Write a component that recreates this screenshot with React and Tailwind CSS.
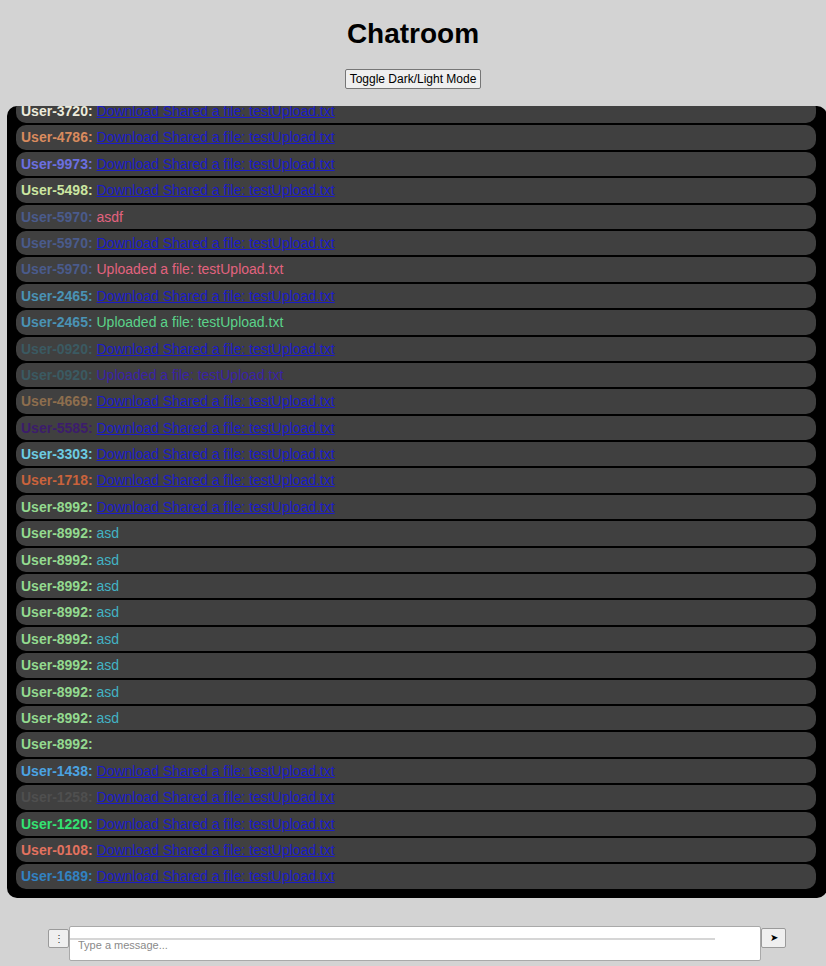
import { useEffect, useRef } from "react";

const LINK = "Download Shared a file: testUpload.txt";

const MESSAGES = [
  { u: "User-3720", c: "#ecebdc", link: true },
  { u: "User-4786", c: "#d98b5e", link: true },
  { u: "User-9973", c: "#6b6fe0", link: true },
  { u: "User-5498", c: "#cbe6a0", link: true },
  { u: "User-5970", c: "#4a5b8c", t: "asdf", tc: "#e2637f" },
  { u: "User-5970", c: "#4a5b8c", link: true },
  { u: "User-5970", c: "#4a5b8c", t: "Uploaded a file: testUpload.txt", tc: "#e2637f" },
  { u: "User-2465", c: "#4a92b4", link: true },
  { u: "User-2465", c: "#4a92b4", t: "Uploaded a file: testUpload.txt", tc: "#5bd38a" },
  { u: "User-0920", c: "#3b5a62", link: true },
  { u: "User-0920", c: "#3b5a62", t: "Uploaded a file: testUpload.txt", tc: "#3a22a6" },
  { u: "User-4669", c: "#8d6e4e", link: true },
  { u: "User-5585", c: "#3c1c6c", link: true },
  { u: "User-3303", c: "#6ccbe2", link: true },
  { u: "User-1718", c: "#c9633c", link: true },
  { u: "User-8992", c: "#93da8f", link: true },
  ...Array.from({ length: 8 }, () => ({ u: "User-8992", c: "#93da8f", t: "asd", tc: "#43b3c4" })),
  { u: "User-8992", c: "#93da8f", t: "", tc: "#43b3c4" },
  { u: "User-1438", c: "#4ba3e2", link: true },
  { u: "User-1258", c: "#4f4f4f", link: true },
  { u: "User-1220", c: "#33e272", link: true },
  { u: "User-0108", c: "#e2725f", link: true },
  { u: "User-1689", c: "#3282c2", link: true },
];

export default function App() {
  const boxRef = useRef(null);

  useEffect(() => {
    // keep the chat scrolled to the newest message
    if (boxRef.current) boxRef.current.scrollTop = boxRef.current.scrollHeight;
  }, []);

  return (
    <div className="min-h-screen w-full overflow-hidden bg-[#d3d3d3] font-['Liberation_Sans',Arial,sans-serif]">
      <h1 className="pt-[19px] text-center text-[28px] font-bold leading-[30px] text-black">Chatroom</h1>
      <div className="mt-[20px] flex justify-center">
        <button className="h-[20px] rounded-[2px] border border-[#767676] bg-[#efefef] px-[4px] text-[12px] leading-[18px] text-black">
          Toggle Dark/Light Mode
        </button>
      </div>

      <div
        ref={boxRef}
        className="mt-[17px] ml-[7px] h-[792px] w-[820px] overflow-hidden rounded-[10px] bg-black pt-[10px] pb-[7px] pl-[9px] pr-[11px]"
      >
        {MESSAGES.map((m, i) => (
          <div key={i} className="mb-[2px] h-[24.4px] rounded-[10px] bg-[#404040] pl-[5px] text-[14px] leading-[24.4px] whitespace-nowrap">
            <span className="font-bold" style={{ color: m.c }}>{m.u}:</span>{" "}
            {m.link ? (
              <a href="#" className="text-[#1c1cc8] underline">{LINK}</a>
            ) : (
              <span style={{ color: m.tc }}>{m.t}</span>
            )}
          </div>
        ))}
      </div>

      <div className="mt-[28px] flex items-start pl-[48px]">
        <button className="mt-[3px] h-[19px] w-[21px] rounded-[2px] border border-[#9a9a9a] bg-[#efefef] text-[10px] leading-[16px] text-[#333]">
          ⋮
        </button>
        <div className="h-[35px] w-[692px] rounded-[2px] border border-[#a9a9a9] bg-white">
          <div className="mt-[11px] h-[2px] w-[645px] bg-[#d6d6d6]" />
          <input
            className="-mt-[1px] block w-full bg-transparent pl-[8px] text-[11px] leading-[13px] text-black placeholder:text-[#8a8a8a] outline-none"
            placeholder="Type a message..."
          />
        </div>
        <button className="mt-[2px] h-[20px] w-[25px] rounded-[2px] border border-[#9a9a9a] bg-[#efefef] text-[10px] leading-[18px] text-black">
          ➤
        </button>
      </div>
    </div>
  );
}
